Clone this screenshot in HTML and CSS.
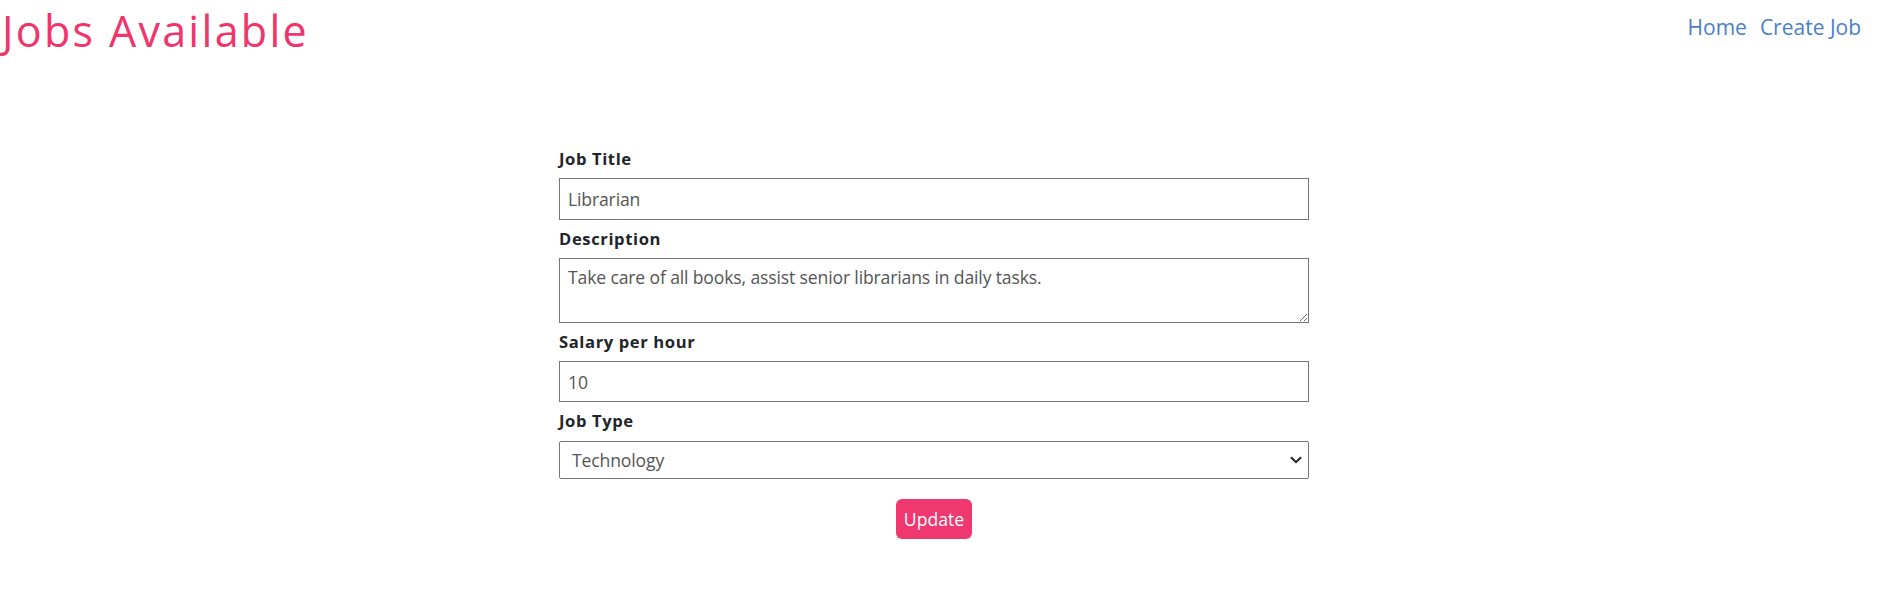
FILE: index.html
```html
<!DOCTYPE html>
<html lang="en">
<head>
<meta charset="utf-8">
<title>Jobs Available</title>
<link rel="stylesheet" href="styles.css">
</head>
<body>
<header class="topbar">
  <h1 class="brand">Jobs Available</h1>
  <nav class="nav">
    <a class="nav-link" href="#">Home</a>
    <a class="nav-link" href="#">Create Job</a>
  </nav>
</header>
<main class="main">
  <form class="job-form">
    <label class="field-label" for="title">Job Title</label>
    <input class="field field-input" id="title" type="text" value="Librarian">
    <label class="field-label" for="desc">Description</label>
    <textarea class="field field-area" id="desc">Take care of all books, assist senior librarians in daily tasks.</textarea>
    <label class="field-label" for="salary">Salary per hour</label>
    <input class="field field-input field-salary" id="salary" type="number" value="10">
    <label class="field-label" for="type">Job Type</label>
    <select class="field field-select" id="type">
      <option>Technology</option>
    </select>
    <div class="actions">
      <button class="btn-update" type="button">Update</button>
    </div>
  </form>
</main>
</body>
</html>
```
FILE: styles.css
```css
* { box-sizing: border-box; }
html, body {
  margin: 0;
  padding: 0;
  background: #ffffff;
}
body {
  font-family: "Open Sans", Lato, sans-serif;
  font-size: 17.6px;
  color: #212529;
}
.topbar {
  display: flex;
  justify-content: space-between;
  align-items: flex-start;
  height: 59px;
  padding: 0 32px 0 2px;
}
.brand {
  margin: 0;
  padding-top: 3px;
  font-size: 43px;
  font-weight: 400;
  line-height: 56px;
  letter-spacing: 2.3px;
  color: #f0346c;
}
.nav {
  display: flex;
  gap: 13px;
  padding-top: 14px;
}
.nav-link {
  font-size: 21px;
  line-height: 26px;
  color: #4a7fc6;
  text-decoration: none;
}
.main {
  padding-top: 87px;
}
.job-form {
  display: flex;
  flex-direction: column;
  width: 750px;
  margin-left: 559px;
}
.field-label {
  display: block;
  font-weight: 700;
  font-size: 16.6px;
  line-height: 26px;
  letter-spacing: 0.6px;
  margin-bottom: 6px;
}
.field {
  font-family: inherit;
  font-size: 17.6px;
  letter-spacing: -0.15px;
  color: #555;
  border: 1px solid #767676;
  border-radius: 0;
  background-color: #fff;
  margin: 0 0 6px 0;
}
.field-input {
  height: 42px;
  padding: 0 8px;
}
.field-salary {
  height: 41px;
  -moz-appearance: textfield;
  appearance: textfield;
}
.field-salary::-webkit-inner-spin-button,
.field-salary::-webkit-outer-spin-button {
  -webkit-appearance: none;
  margin: 0;
}
.field-area {
  height: 65px;
  padding: 6px 8px;
  resize: vertical;
}
.field-select {
  -webkit-appearance: none;
  appearance: none;
  height: 38px;
  margin-top: 1px;
  padding: 0 30px 0 12px;
  border-radius: 2px;
  color: #555;
  background-image: url("data:image/svg+xml,%3Csvg xmlns='http://www.w3.org/2000/svg' width='12' height='8' viewBox='0 0 12 8'%3E%3Cpath d='M1 1.2 L6 6.2 L11 1.2' fill='none' stroke='%23222' stroke-width='2'/%3E%3C/svg%3E");
  background-repeat: no-repeat;
  background-position: right 6px center;
  background-size: 12px 8px;
}
.actions {
  display: flex;
  justify-content: center;
  padding-top: 14px;
}
.btn-update {
  width: 76px;
  height: 40px;
  border: none;
  border-radius: 6px;
  background: #f03870;
  color: #fff;
  font-family: inherit;
  font-size: 17.6px;
  padding: 0;
  cursor: pointer;
}
```
